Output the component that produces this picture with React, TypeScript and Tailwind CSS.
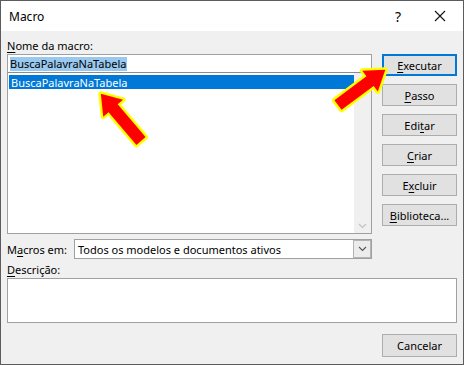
import type { ReactNode } from "react";

function U({ children }: { children: ReactNode }) {
  return <span className="underline underline-offset-[2px] decoration-1">{children}</span>;
}

function Btn({ children, primary }: { children: ReactNode; primary?: boolean }) {
  return (
    <button
      type="button"
      className={
        primary
          ? "flex h-[22px] w-[75px] items-center justify-center border-2 border-[#0078d7] bg-[#e1e1e1] text-black"
          : "flex h-[22px] w-[75px] items-center justify-center border border-[#adadad] bg-[#e1e1e1] text-black"
      }
    >
      {children}
    </button>
  );
}

function Arrow({ x, y, len, angle }: { x: number; y: number; len: number; angle: number }) {
  const h = len - 19;
  const pts = `0,-6 ${h},-6 ${h},-13 ${len},0 ${h},13 ${h},6 0,6`;
  return (
    <g transform={`translate(${x} ${y}) rotate(${angle})`}>
      <polygon
        points={pts}
        fill="#ff0000"
        stroke="#ffff00"
        strokeWidth={5}
        strokeLinejoin="round"
        paintOrder="stroke"
      />
    </g>
  );
}

export default function App() {
  return (
    <div className="relative flex h-[365px] w-[464px] flex-col border border-[#5c5c5c] bg-[#f0f0f0] font-['Noto_Sans',sans-serif] text-[11px] leading-[15px] text-black">
      {/* title bar */}
      <div className="flex h-[30px] items-center bg-white">
        <span className="ml-[8px] text-[12px]">Macro</span>
        <span className="ml-auto mr-[33px] text-[14px]">?</span>
        <svg width="12" height="12" viewBox="0 0 12 12" className="mr-[17px]">
          <path d="M1 1 L11 11 M11 1 L1 11" stroke="#111" strokeWidth="1.1" />
        </svg>
      </div>

      <div className="flex flex-1 flex-col px-[6px] pt-[6px]">
        <div className="flex">
          {/* left column */}
          <div className="flex w-[365px] flex-col">
            <div className="flex h-[17px] items-center">
              <span>
                <U>N</U>ome da macro:
              </span>
            </div>
            <div className="flex h-[19px] items-center border border-[#a0a0a0] border-b-[#8c8c8c] bg-white px-[2px]">
              <span className="bg-[#99c9ef] leading-[14px]">BuscaPalavraNaTabela</span>
            </div>
            <div className="flex h-[161px] border border-t-0 border-[#a0a0a0] bg-white">
              <div className="flex-1 pl-[1px] pt-[2px]">
                <div className="flex h-[14px] items-center bg-[#0078d7] px-[2px] text-white">
                  BuscaPalavraNaTabela
                </div>
              </div>
              <div className="flex w-[17px] flex-col items-center justify-between bg-[#f0f0f0] py-[4px]">
                <svg width="9" height="6" viewBox="0 0 9 6">
                  <path d="M1 5 L4.5 1.5 L8 5" fill="none" stroke="#c2c2c2" strokeWidth="1.2" />
                </svg>
                <svg width="9" height="6" viewBox="0 0 9 6">
                  <path d="M1 1 L4.5 4.5 L8 1" fill="none" stroke="#c2c2c2" strokeWidth="1.2" />
                </svg>
              </div>
            </div>
            <div className="mt-[5px] flex h-[20px] items-center">
              <span className="w-[67px]">
                M<U>a</U>cros em:
              </span>
              <div className="flex h-[20px] flex-1 items-stretch border border-[#a0a0a0] bg-white">
                <span className="flex flex-1 items-center pl-[3px]">
                  Todos os modelos e documentos ativos
                </span>
                <span className="flex w-[18px] items-center justify-center border border-[#b4b4b4] bg-[#ececec]">
                  <svg width="9" height="6" viewBox="0 0 9 6">
                    <path d="M1 1 L4.5 4.5 L8 1" fill="none" stroke="#555" strokeWidth="1.1" />
                  </svg>
                </span>
              </div>
            </div>
          </div>

          {/* right column */}
          <div className="ml-[10px] flex flex-col gap-[8px] pt-[17px]">
            <Btn primary>
              <span>
                <U>E</U>xecutar
              </span>
            </Btn>
            <Btn>
              <span>
                <U>P</U>asso
              </span>
            </Btn>
            <Btn>
              <span>
                Edi<U>t</U>ar
              </span>
            </Btn>
            <Btn>
              <span>
                <U>C</U>riar
              </span>
            </Btn>
            <Btn>
              <span>
                E<U>x</U>cluir
              </span>
            </Btn>
            <Btn>
              <span>
                <U>B</U>iblioteca...
              </span>
            </Btn>
          </div>
        </div>

        <div className="mt-[2px] flex h-[17px] items-center">
          <span>
            <U>D</U>escrição:
          </span>
        </div>
        <div className="h-[45px] border border-[#a0a0a0] bg-white" />
        <div className="mt-[11px] flex justify-end">
          <button
            type="button"
            className="flex h-[23px] w-[75px] items-center justify-center border border-[#adadad] bg-[#e1e1e1]"
          >
            Cancelar
          </button>
        </div>
      </div>

      <svg className="pointer-events-none absolute left-[-1px] top-[-1px]" width="464" height="365">
        <Arrow x={141} y={141} len={62} angle={-130.4} />
        <Arrow x={338} y={105} len={59} angle={-36.7} />
      </svg>
    </div>
  );
}
